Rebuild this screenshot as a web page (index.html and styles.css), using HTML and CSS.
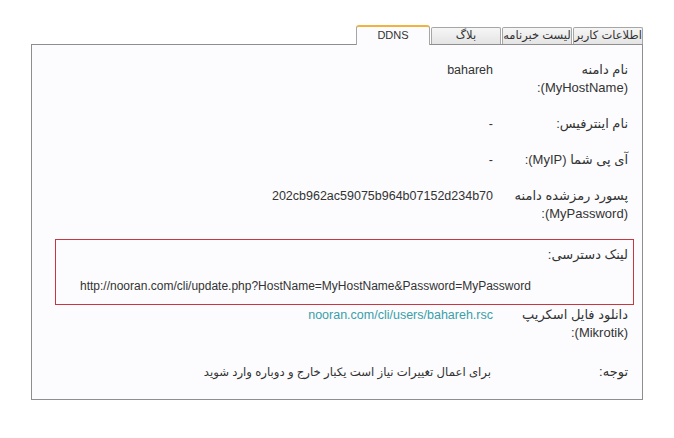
FILE: index.html
```html
<!DOCTYPE html>
<html lang="fa" dir="rtl">
<head>
    <meta charset="UTF-8">
    <meta name="viewport" content="width=device-width, initial-scale=1.0">
    <title>DDNS</title>
    <link rel="stylesheet" href="styles.css">
</head>
<body>
    <div class="box">
        <ul class="tabs">
            <li class="tab">اطلاعات کاربر</li>
            <li class="tab">لیست خبرنامه</li>
            <li class="tab">بلاگ</li>
            <li class="tab active">DDNS</li>
        </ul>

        <div class="panel">
            <div class="row">
                <div class="label">نام دامنه (MyHostName):</div>
                <div class="value">bahareh</div>
            </div>
            <div class="row">
                <div class="label">نام اینترفیس:</div>
                <div class="value">-</div>
            </div>
            <div class="row">
                <div class="label">آی پی شما (MyIP):</div>
                <div class="value">-</div>
            </div>
            <div class="row">
                <div class="label">پسورد رمزشده دامنه (MyPassword):</div>
                <div class="value">202cb962ac59075b964b07152d234b70</div>
            </div>

            <div class="link-box">
                <div class="link-title">لینک دسترسی:</div>
                <div class="link-url" dir="ltr">http://nooran.com/cli/update.php?HostName=MyHostName&amp;Password=MyPassword</div>
            </div>

            <div class="row row-after-box">
                <div class="label">دانلود فایل اسکریپ (Mikrotik):</div>
                <div class="value"><a href="#" class="script-link">nooran.com/cli/users/bahareh.rsc</a></div>
            </div>
            <div class="row">
                <div class="label">توجه:</div>
                <div class="value note">برای اعمال تغییرات نیاز است یکبار خارج و دوباره وارد شوید</div>
            </div>
        </div>
    </div>
</body>
</html>
```

FILE: styles.css
```css
body {
    font-family: "Liberation Sans", "DejaVu Sans", sans-serif;
    font-size: 12px;
    color: #333;
    background: white;
    margin: 0;
    padding: 0;
}

.box {
    width: 612px;
    margin: 25px 0 0 0;
    margin-right: 31px;
    direction: ltr;
}

/* tabs */
.tabs {
    list-style: none;
    margin: 0;
    padding: 0;
    display: flex;
    flex-direction: row-reverse;
    align-items: flex-end;
    position: relative;
    z-index: 1;
}

.tab {
    box-sizing: border-box;
    width: 70px;
    height: 17px;
    line-height: 15px;
    margin-left: 1px;
    text-align: center;
    font-size: 11.5px;
    color: #333;
    direction: rtl;
    white-space: nowrap;
    overflow: hidden;
    border: 1px solid #a6a6a6;
    border-bottom: none;
    border-radius: 2px 2px 0 0;
    background: linear-gradient(to bottom, #f6f6f6, #e4e4e4);
}

.tab.active {
    width: 74px;
    height: 20px;
    line-height: 17px;
    margin-bottom: -1px;
    margin-left: 0;
    background: #fcfcfe;
    border-top: 2px solid #f2b33d;
    border-radius: 3px 3px 0 0;
    font-size: 11px;
}

/* content */
.panel {
    border: 1px solid #8e8e8e;
    background: #fcfcfe;
    padding: 7px 0 9px;
    direction: rtl;
}

.row {
    display: flex;
    padding: 9px 14px 9px 0;
    line-height: 18px;
}

.label {
    width: 130px;
    flex-shrink: 0;
    margin-left: 5px;
    font-size: 13px;
}

.value {
    flex: 1;
    font-size: 12.5px;
}

.link-box {
    border: 1px solid #c8363f;
    margin: 7px 8px 0 23px;
    padding: 6px 5px 9px 0;
    line-height: 18px;
}

.link-title {
    font-size: 13px;
}

.link-url {
    margin-top: 13px;
    padding-left: 24px;
    text-align: left;
}

.row-after-box {
    padding-top: 1px;
    padding-bottom: 12px;
}

.script-link {
    color: #3b9ea8;
    text-decoration: none;
}

.note {
    font-size: 11.7px;
    padding-right: 2px;
}
```
